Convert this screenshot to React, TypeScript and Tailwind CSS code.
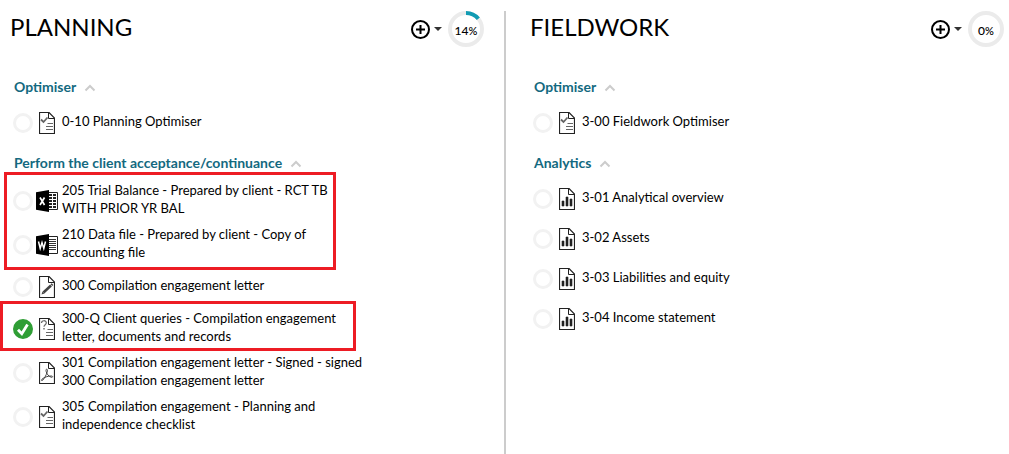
import type { ReactNode } from 'react';

type IconKind = 'checklist' | 'excel' | 'word' | 'pencil' | 'query' | 'pdf' | 'chart';
type Item = { label: string; icon: IconKind; done?: boolean };
type Group = { items: Item[]; mark?: string };
type Section = { title: string; groups: Group[] };

const planning: Section[] = [
  { title: 'Optimiser', groups: [{ items: [{ label: '0-10 Planning Optimiser', icon: 'checklist' }] }] },
  {
    title: 'Perform the client acceptance/continuance',
    groups: [
      {
        mark: '-top-[9px] -bottom-[9px] -left-[9px] w-[332px]',
        items: [
          { label: '205 Trial Balance - Prepared by client - RCT TB WITH PRIOR YR BAL', icon: 'excel' },
          { label: '210 Data file - Prepared by client - Copy of accounting file', icon: 'word' },
        ],
      },
      { items: [{ label: '300 Compilation engagement letter', icon: 'pencil' }] },
      {
        mark: '-top-2 -bottom-[6px] -left-[13px] w-[356px]',
        items: [
          {
            label: '300-Q Client queries - Compilation engagement letter, documents and records',
            icon: 'query',
            done: true,
          },
        ],
      },
      {
        items: [
          { label: '301 Compilation engagement letter - Signed - signed 300 Compilation engagement letter', icon: 'pdf' },
          { label: '305 Compilation engagement - Planning and independence checklist', icon: 'checklist' },
        ],
      },
    ],
  },
];

const fieldwork: Section[] = [
  { title: 'Optimiser', groups: [{ items: [{ label: '3-00 Fieldwork Optimiser', icon: 'checklist' }] }] },
  {
    title: 'Analytics',
    groups: [
      {
        items: [
          { label: '3-01 Analytical overview', icon: 'chart' },
          { label: '3-02 Assets', icon: 'chart' },
          { label: '3-03 Liabilities and equity', icon: 'chart' },
          { label: '3-04 Income statement', icon: 'chart' },
        ],
      },
    ],
  },
];

const glyphs: Record<'checklist' | 'pencil' | 'query' | 'pdf' | 'chart', ReactNode> = {
  checklist: (
    <>
      <path d="M2 7.5l2.5 2.5L8.500 5.500" fill="none" stroke="#666" strokeWidth="1.800" />
      <path d="M8.500 11.500h5.500M7 14.500h7M7 17.500h7" stroke="#666" strokeWidth="1.200" />
    </>
  ),
  pencil: (
    <>
      <path d="M4.5 16.5L12 9.5" stroke="#444" strokeWidth="2.6" />
      <path d="M2.5 18.5l1-3 2 2z" fill="#444" />
      <path d="M12.4 9.2l1.1-1" stroke="#444" strokeWidth="2.4" />
    </>
  ),
  query: (
    <>
      <path d="M2.500 5c0-3 4.800-3 4.800-.2 0 1.9-2.300 1.900-2.300 4" fill="none" stroke="#666" strokeWidth="1.2" />
      <path d="M4.300 10h1.4v1.4H4.300z" fill="#666" />
      <path d="M8.500 11.500h5.500M7 14.500h7M7 17.500h7" stroke="#666" strokeWidth="1.200" />
    </>
  ),
  pdf: (
    <path
      d="M7 7.6c1.2-1.2 1.9.3 1.1 2.7-.9 3-3 6.500-4.600 8.100-.9.700-1.500-.2-.5-1.200 2-1.900 6-3.300 9.400-3.200 1.900.1 1.500 1.700-.2 1.200C9.500 14.500 7.600 11.500 7.200 9.600c-.2-.9-.3-1.500-.2-2z"
      fill="none"
      stroke="#444"
      strokeWidth="1"
    />
  ),
  chart: <path d="M3 13h2v5H3zM7 9h2v9H7zM11 11h2v7h-2z" fill="#222" stroke="#222" strokeWidth=".6" />,
};

function DocIcon({ kind }: { kind: IconKind }) {
  if (kind === 'excel' || kind === 'word') {
    return (
      <svg viewBox="0 0 22 22" className="h-[22px] w-[22px]" aria-hidden="true">
        <path d="M12 2.500h9.500v17H12" fill="#fff" stroke="#222" strokeWidth="1" />
        {kind === 'excel' ? (
          <path
            d="M13 5h3M13 8h3M13 11h3M13 14h3M13 17h3M17 5h3M17 8h3M17 11h3M17 14h3M17 17h3"
            stroke="#222"
            strokeWidth="1.800"
          />
        ) : (
          <path d="M13 5.500h7M13 7.500h7M13 9.500h7M13 11.500h7M13 13.500h7M13 15.500h7" stroke="#333" strokeWidth="1" />
        )}
        <path d="M0 2.300L13 0v22L0 19.700z" fill="#000" />
        {kind === 'excel' ? (
          <path d="M4 7.500l4.500 7.500M8.500 7.500L4 15" stroke="#fff" strokeWidth="1.700" />
        ) : (
          <path d="M2.500 7.500l1.700 7 1.800-6 1.800 6 1.700-7" fill="none" stroke="#fff" strokeWidth="1.500" />
        )}
      </svg>
    );
  }
  return (
    <svg viewBox="0 0 16 22" className="h-[22px] w-4" aria-hidden="true">
      <path d="M.5.5h9.500l5.500 5.500v15.500H.5z" fill="#fff" stroke="#222" strokeWidth="1.200" />
      <path d="M9.500.5v6h6" fill="none" stroke="#222" strokeWidth="1" />
      {glyphs[kind]}
    </svg>
  );
}

function ItemRow({ item }: { item: Item }) {
  return (
    <li className="flex min-h-8 items-center">
      <span className="mt-1 grid h-5 w-5 shrink-0">
        <input
          type="checkbox"
          aria-label={`${item.label} complete`}
          defaultChecked={item.done}
          className="peer col-start-1 row-start-1 h-5 w-5 appearance-none rounded-full border-3 border-[#f2f2f2] checked:border-[#2f9e35] checked:bg-[#2f9e35]"
        />
        <svg
          viewBox="0 0 20 20"
          className="pointer-events-none invisible col-start-1 row-start-1 h-5 w-5 peer-checked:visible"
          aria-hidden="true"
        >
          <path d="M5 10.800l3.800 4L14.500 5.500" fill="none" stroke="#fff" strokeWidth="2.800" />
        </svg>
      </span>
      <span className="mt-1 flex w-[29px] shrink-0 justify-center pr-px">
        <DocIcon kind={item.icon} />
      </span>
      <a href="#" className="max-w-[302px] text-[13px] text-black">
        {item.label}
      </a>
    </li>
  );
}

function SectionBlock({ section }: { section: Section }) {
  return (
    <section className="pl-[3px]">
      <h2 className="pl-px">
        <button type="button" className="flex items-center gap-2 font-bold text-[#13697f]">
          {section.title}
          <svg viewBox="0 0 12 8" className="mt-0.5 h-2 w-3" aria-hidden="true">
            <path d="M1.500 6.500L6 2l4.500 4.500" fill="none" stroke="#ccc" strokeWidth="2" />
          </svg>
        </button>
      </h2>
      <div className="mt-[9px] flex flex-col gap-2">
        {section.groups.map((group, i) => (
          <div key={i} className="relative">
            <ul className="flex flex-col gap-2">
              {group.items.map((item) => (
                <ItemRow key={item.label} item={item} />
              ))}
            </ul>
            {group.mark && (
              <div className={`pointer-events-none absolute border-3 border-[#ed1c24] ${group.mark}`} />
            )}
          </div>
        ))}
      </div>
    </section>
  );
}

function Phase({ title, percent, sections }: { title: string; percent: number; sections: Section[] }) {
  return (
    <>
      <header className="flex h-9 items-center">
        <h1 className="flex-1 pb-1 text-2xl">{title}</h1>
        <button type="button" aria-label={`Add to ${title}`} className="mr-1.5 flex items-center gap-1">
          <svg viewBox="0 0 19 19" className="h-[19px] w-[19px]" aria-hidden="true">
            <circle cx="9.500" cy="9.500" r="8.500" fill="none" stroke="#000" strokeWidth="2" />
            <path d="M9.500 5v9M5 9.500h9" stroke="#000" strokeWidth="2" />
          </svg>
          <svg viewBox="0 0 8 4" className="h-1 w-2" aria-hidden="true">
            <path d="M0 0h8L4 4z" fill="#333" />
          </svg>
        </button>
        <div className="grid h-9 w-9 place-items-center">
          <svg viewBox="0 0 36 36" className="col-start-1 row-start-1 h-9 w-9 -rotate-90" aria-hidden="true">
            <circle cx="18" cy="18" r="16" fill="none" stroke="#ebebeb" strokeWidth="4" />
            {percent > 0 && (
              <circle
                cx="18"
                cy="18"
                r="16"
                fill="none"
                stroke="#119bb3"
                strokeWidth="4"
                pathLength="100"
                strokeDasharray={`${percent} 100`}
              />
            )}
          </svg>
          <span className="col-start-1 row-start-1 pt-1 text-xs leading-4 font-medium">
            {percent}
            <span className="text-[11px]">%</span>
          </span>
        </div>
      </header>
      <div className="mt-[31px] flex flex-col gap-[17px]">
        {sections.map((s) => (
          <SectionBlock key={s.title} section={s} />
        ))}
      </div>
    </>
  );
}

export default function App() {
  return (
    <main className="grid min-h-screen grid-cols-[506fr_489fr] gap-x-3.5 bg-white pt-[11px] font-['Lato',sans-serif] text-[14px] leading-[18px] text-black">
      <div className="border-r-2 border-[#ccc] pr-5 pl-[10px]">
        <Phase title="PLANNING" percent={14} sections={planning} />
      </div>
      <div className="pr-[5px] pl-[10px]">
        <Phase title="FIELDWORK" percent={0} sections={fieldwork} />
      </div>
    </main>
  );
}
